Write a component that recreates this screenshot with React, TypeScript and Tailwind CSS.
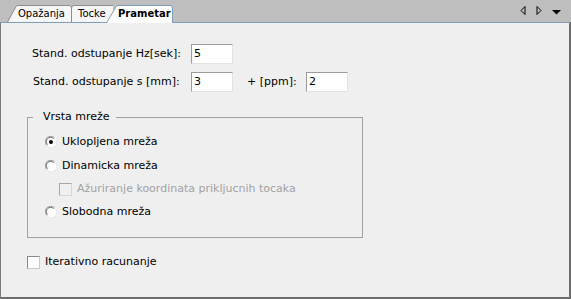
import React from "react";

const FONT = "font-['DejaVu_Sans','Liberation_Sans',sans-serif]";

function Radio({ checked }: { checked?: boolean }) {
  return (
    <svg width="12" height="12" viewBox="0 0 12 12" className="shrink-0">
      <circle cx="6" cy="6" r="5.5" fill="#ffffff" />
      <path d="M1.8 9.5 A5 5 0 0 1 9.5 1.8" fill="none" stroke="#9a9a9a" strokeWidth="1" />
      <path d="M2.6 8.6 A4 4 0 0 1 8.6 2.6" fill="none" stroke="#6a6a6a" strokeWidth="1" />
      <path d="M10.2 2.5 A5 5 0 0 1 2.5 10.2" fill="none" stroke="#e8e8e8" strokeWidth="1" />
      {checked && <circle cx="6" cy="6" r="2" fill="#000000" />}
    </svg>
  );
}

function Check({ disabled }: { disabled?: boolean }) {
  return (
    <div
      className={
        disabled
          ? "w-[13px] h-[13px] shrink-0 border border-t-[#a8a8a8] border-l-[#a8a8a8] border-r-[#d8d8d8] border-b-[#d8d8d8] bg-[#efefef]"
          : "w-[13px] h-[13px] shrink-0 border border-t-[#8a8a8a] border-l-[#8a8a8a] border-r-[#c8c8c8] border-b-[#c8c8c8] bg-white"
      }
    />
  );
}

function Input({ value }: { value: string }) {
  return (
    <div className="w-[42px] h-[20px] shrink-0 bg-white border border-t-[#9c9c9c] border-l-[#9c9c9c] border-r-[#e2e2e2] border-b-[#e2e2e2] flex items-center pl-[2px] text-[11px] text-black">
      {value}
    </div>
  );
}

export default function App() {
  return (
    <div className={`w-[571px] h-[299px] flex flex-col bg-[#bebebe] ${FONT} text-black`}>
      {/* tab strip */}
      <div className="h-[22px] flex items-end pl-[7px] shrink-0">
        <div className="relative w-[65px] h-[17px] flex items-center pl-[11px] text-[10px]">
          <svg className="absolute inset-0" width="65" height="17" viewBox="0 0 65 17">
            <path d="M0.5 17 L9.2 1.3 Q9.8 0.5 11 0.5 L62 0.5 Q64.5 0.5 64.5 3 L64.5 17" fill="#f6f6f6" stroke="#8e8e8e" />
          </svg>
          <span className="relative">Opažanja</span>
        </div>
        <div className="relative -ml-[1px] w-[42px] h-[17px] flex items-center pl-[7px] text-[10px]">
          <svg className="absolute inset-0" width="42" height="17" viewBox="0 0 42 17">
            <path d="M0.5 17 L0.5 3 Q0.5 0.5 3 0.5 L42 0.5 L42 17 Z" fill="#f6f6f6" stroke="none" />
            <path d="M0.5 17 L0.5 3 Q0.5 0.5 3 0.5 L42 0.5" fill="none" stroke="#8e8e8e" />
          </svg>
          <span className="relative">Tocke</span>
        </div>
        <div className="relative z-10 -ml-[7px] -mb-[1px] w-[67px] h-[18px] flex items-center pl-[12px] pb-[1px] text-[10px] font-bold">
          <svg className="absolute inset-0" width="67" height="18" viewBox="0 0 67 18">
            <path d="M0.5 18 L10.2 1.3 Q10.8 0.5 12 0.5 L64 0.5 Q66.5 0.5 66.5 3 L66.5 18 Z" fill="#ffffff" stroke="none" />
            <path d="M0.5 18 L10.2 1.3 Q10.8 0.5 12 0.5 L64 0.5 Q66.5 0.5 66.5 3 L66.5 18" fill="none" stroke="#7f9db9" />
          </svg>
          <span className="relative">Prametar</span>
        </div>
        <div className="ml-auto self-stretch flex items-center pr-[10px] pb-[2px]">
          <svg width="6" height="9" viewBox="0 0 6 9" className="mr-[10px]">
            <path d="M5 0.5 L1 4.5 L5 8.5 Z" fill="none" stroke="#000" strokeWidth="1" />
          </svg>
          <svg width="6" height="9" viewBox="0 0 6 9" className="mr-[10px]">
            <path d="M1 0.5 L5 4.5 L1 8.5 Z" fill="none" stroke="#000" strokeWidth="1" />
          </svg>
          <svg width="9" height="5" viewBox="0 0 9 5" className="mt-[4px]">
            <path d="M0 0 L9 0 L4.5 4.5 Z" fill="#000" />
          </svg>
        </div>
      </div>

      {/* body */}
      <div className="flex-1 bg-[#efefef] border-t border-t-[#7f9db9] border-l border-l-[#7a7a7a] border-r-2 border-r-[#6e6e6e] border-b-2 border-b-[#6e6e6e] text-[11px]">
        <div className="pl-[31px] pt-[21px]">
          <div className="flex items-center h-[20px]">
            <div className="w-[159px]">Stand. odstupanje Hz[sek]:</div>
            <Input value="5" />
          </div>
          <div className="flex items-center h-[20px] mt-[8px]">
            <div className="w-[159px] pl-[1px]">Stand. odstupanje s [mm]:</div>
            <Input value="3" />
            <div className="ml-[14px] w-[59px]">+ [ppm]:</div>
            <Input value="2" />
          </div>
        </div>

        <div className="relative ml-[26px] mt-[25px] w-[336px] h-[121px] border border-[#a0a0a0]">
          <span className="absolute left-[5px] top-[-8px] pl-[10px] pr-[6px] bg-[#efefef] leading-[14px]">
            Vrsta mreže
          </span>
          <div className="pt-[12px] pl-[17px] flex flex-col">
            <div className="h-[24px] flex items-center gap-[5px]">
              <Radio checked />
              <span>Uklopljena mreža</span>
            </div>
            <div className="h-[24px] flex items-center gap-[5px]">
              <Radio />
              <span>Dinamicka mreža</span>
            </div>
            <div className="h-[22px] flex items-center gap-[5px] pl-[14px]">
              <Check disabled />
              <span className="text-[#a2a2a2]">Ažuriranje koordinata prikljucnih tocaka</span>
            </div>
            <div className="h-[24px] flex items-center gap-[5px]">
              <Radio />
              <span>Slobodna mreža</span>
            </div>
          </div>
        </div>

        <div className="ml-[26px] mt-[18px] h-[13px] flex items-center gap-[5px]">
          <Check />
          <span>Iterativno racunanje</span>
        </div>
      </div>
    </div>
  );
}
